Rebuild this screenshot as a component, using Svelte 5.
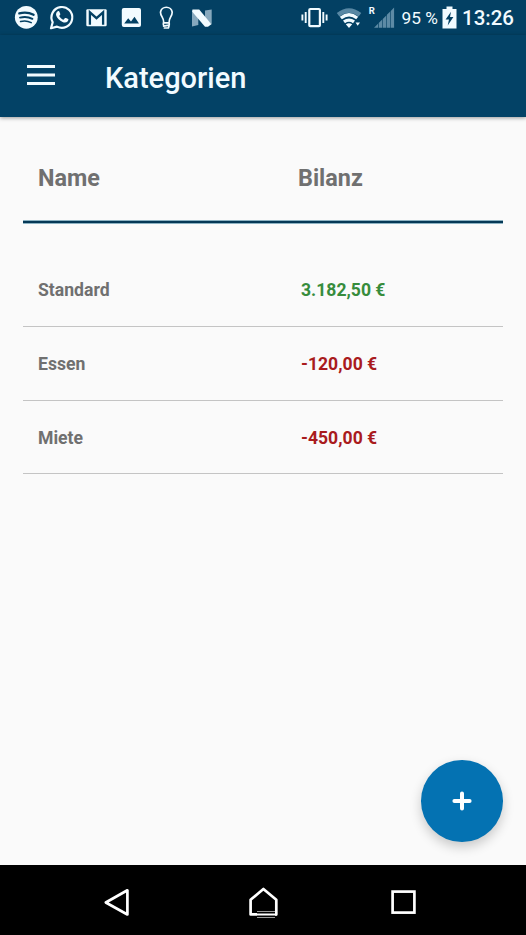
<script>
  const rows = [
    { name: 'Standard', balance: '3.182,50 €', positive: true },
    { name: 'Essen', balance: '-120,00 €', positive: false },
    { name: 'Miete', balance: '-450,00 €', positive: false }
  ];
</script>

<div class="screen">
  <div class="status">
    <svg class="notifications" width="220" height="35" viewBox="0 0 220 35">
      <circle cx="26.3" cy="17.3" r="11.4" fill="#f2fbff" />
      <g fill="none" stroke="#034063" stroke-linecap="round">
        <path d="M19.3 13.4Q26.8 11.2 33.6 14.8" stroke-width="2.3" />
        <path d="M20 17.6Q26.6 15.8 32.4 18.8" stroke-width="1.9" />
        <path d="M20.6 21.5Q26.2 20 31.2 22.6" stroke-width="1.6" />
      </g>
      <path d="M51 28.2L52.7 22.3A10.4 10.4 0 1 1 57 26.6Z" fill="none" stroke="#f2fbff" stroke-width="2.2" stroke-linejoin="round" />
      <path d="M57.8 11.2C58.6 10.9 59.2 11.2 59.4 11.8L60.3 14C60.5 14.7 59.6 15.4 59.2 15.9C60.2 17.8 61.6 19 63.5 19.8L65 18.1C65.3 17.8 65.7 17.9 66 18L68.2 19.1C68.6 19.4 68.3 20.6 67.8 21.3C66.5 22.6 64.6 22.9 62.6 22C59.6 20.9 57 18 56.3 15.8C55.6 14 56.4 12 57.8 11.2Z" fill="#f2fbff" />
      <rect x="86.3" y="9.3" width="20.4" height="17" rx="1.2" fill="#f2fbff" />
      <path d="M89.9 24.8V12.4L96.5 18.2L103.1 12.4V24.8" fill="none" stroke="#034063" stroke-width="2.3" />
      <rect x="121.8" y="8" width="19.2" height="19" rx="2" fill="#f2fbff" />
      <path d="M124.2 23.5L128.2 18.2L131 21.4L134.5 16.8L139 23.5Z" fill="#034063" />
      <g fill="none" stroke="#f2fbff" stroke-width="1.7" stroke-linecap="round" stroke-linejoin="round">
        <path d="M163.6 21.6C163.6 17.6 160.5 16.2 160.5 12.2A5.9 5.7 0 0 1 172.2 12.2C172.2 16.2 169.2 17.6 169.2 21.6" />
        <path d="M163.4 22.8H169.2V25.2L163.6 26.2M163.4 22.8V24.8M164.4 28H168.4L169 26" />
      </g>
      <path d="M192 11.5L198.3 17V25L192 26.5ZM205 10.5L211.7 9.5V24.5L205 19Z" fill="#86a8bd" />
      <path d="M192.5 9.5H199.2L211.4 24.2L208 26.7H205L192 11.6Z" fill="#f2fbff" />
    </svg>
    <svg class="indicators" width="100" height="35" viewBox="298 0 100 35">
      <rect x="309.3" y="9" width="10.6" height="17.2" rx="1" fill="none" stroke="#f2fbff" stroke-width="2.2" />
      <path d="M305.7 12V23M302.4 14.5V20.5M323.3 12V23M326.6 14.5V20.5" stroke="#f2fbff" stroke-width="1.9" />
      <path d="M336.8 13Q349 3.5 361.3 13L358.6 16.4Q349 9 339.4 16.4Z" fill="#5988a4" />
      <path d="M339.8 16.8Q349 9.4 358.2 16.8L356.2 19.3Q349 13.7 341.9 19.3Z" fill="#f2fbff" />
      <path d="M343 20.6Q349 16.2 355 20.6L353 23.2Q349 20.4 345 23.2ZM345.8 24.3Q349 22.4 352.2 24.3L349 27.9ZM355.5 22.5H360L357.7 25.8Z" fill="#f2fbff" />
      <text x="368.8" y="14" class="roaming">R</text>
      <path d="M374 27.7L378 23.7V27.7ZM378.7 23L382.2 19.5V27.7H378.7ZM382.8 18.9L386.3 15.4V27.7H382.8ZM386.9 14.8L390.2 11.5V27.7H386.9ZM390.8 10.9L394.1 7.6V27.7H390.8Z" fill="#5d8aa5" />
    </svg>
    <span class="percent">95 %</span>
    <svg class="battery" width="15" height="24" viewBox="0 0 15 24">
      <path d="M4.5 .5H10.5V3H14.5V22.5H.5V3H4.5Z" fill="#f2fbff" />
      <path d="M9 5.7L3.6 13.5H7L5.7 19.5L11.4 11H8Z" fill="#034063" />
    </svg>
    <span class="clock">13:26</span>
  </div>

  <header>
    <svg width="28" height="20" viewBox="0 0 28 20" aria-label="Menü">
      <path d="M0 1.5H28M0 10H28M0 18.5H28" stroke="#f2fbff" stroke-width="3" />
    </svg>
    <h1>Kategorien</h1>
  </header>

  <main>
    <div class="row head"><span>Name</span><span>Bilanz</span></div>
    {#each rows as row}
      <div class="row">
        <span>{row.name}</span>
        <span class="amount" class:positive={row.positive}>{row.balance}</span>
      </div>
    {/each}
    <button class="fab" aria-label="Hinzufügen">
      <svg width="20" height="20" viewBox="0 0 20 20">
        <path d="M10 2.4V17.6M2.4 10H17.6" stroke="#fff" stroke-width="4" stroke-linecap="round" />
      </svg>
    </button>
  </main>

  <nav>
    <svg width="526" height="70" viewBox="0 865 526 70" fill="none" stroke="#fff" stroke-width="2.7" stroke-linejoin="round">
      <path d="M105.8 902.5L127.4 890.3V914.5Z" />
      <path d="M257 914.4H250.6V899.8L263.4 889L276.3 899.8V914.4H257" />
      <path d="M257 910.9H275V918H257Z" fill="#000" stroke="none" />
      <path d="M257 911.5H275M257 917.5H275" stroke="#999" stroke-width="1" />
      <path d="M257 914.5H277" stroke-width="2" />
      <rect x="392.6" y="891.6" width="21.8" height="21" stroke-linejoin="miter" />
    </svg>
  </nav>
</div>

<style>
  :global(body) { margin: 0; }
  .screen {
    display: flex;
    flex-direction: column;
    width: 526px;
    height: 935px;
    background: #fafafa;
    font-family: Roboto, "Liberation Sans", sans-serif;
    overflow: hidden;
  }
  svg { display: block; flex: none; }
  .status {
    display: flex;
    align-items: center;
    height: 35px;
    flex: none;
    background: #034063;
    color: #f2fbff;
    white-space: nowrap;
  }
  .indicators { margin-left: 78px; }
  .roaming { font-size: 9.5px; font-weight: 700; fill: #f2fbff; }
  .percent { width: 44px; padding-left: 3.5px; box-sizing: border-box; font-size: 17.3px; line-height: 36px; }
  .clock { margin-left: 5px; font-size: 20.5px; font-weight: 500; line-height: 37px; padding-top: 2px; }
  header {
    display: flex;
    align-items: center;
    height: 82px;
    flex: none;
    box-sizing: border-box;
    padding-left: 27px;
    gap: 50px;
    background: #034266;
    box-shadow: 0 1px 4px rgba(0, 0, 0, .4);
    z-index: 1;
  }
  header svg { margin-bottom: 2px; }
  h1 { margin: 4px 0 0; color: #f2fbff; font-size: 29px; font-weight: 500; line-height: 36px; }
  main {
    position: relative;
    flex: 1;
    padding: 17px 23.5px 0 23px;
  }
  .row {
    display: grid;
    grid-template-columns: 263px 1fr;
    align-items: center;
    height: 73.8px;
    box-sizing: border-box;
    padding: 1.5px 0 0 15px;
    border-bottom: 1px solid #c4c4c4;
    color: #707070;
    font-size: 17.6px;
    font-weight: 700;
  }
  .head {
    grid-template-columns: 260px 1fr;
    height: 89px;
    margin-bottom: 30px;
    padding-top: 0;
    border-bottom: 2px solid #053856;
    box-shadow: 0 1px #8db2c2, inset 0 -1px #8db2c2;
    font-size: 23.4px;
  }
  .amount { color: #a91b1d; }
  .positive { color: #378c3c; }
  .fab {
    position: absolute;
    right: 23.5px;
    bottom: 23.5px;
    display: grid;
    place-items: center;
    width: 81.7px;
    height: 81.7px;
    padding: 0;
    border: 0;
    border-radius: 50%;
    background: #0472b2;
    box-shadow: 0 5px 12px rgba(0, 0, 0, .2);
  }
  nav { height: 70px; flex: none; background: #000; }
</style>
